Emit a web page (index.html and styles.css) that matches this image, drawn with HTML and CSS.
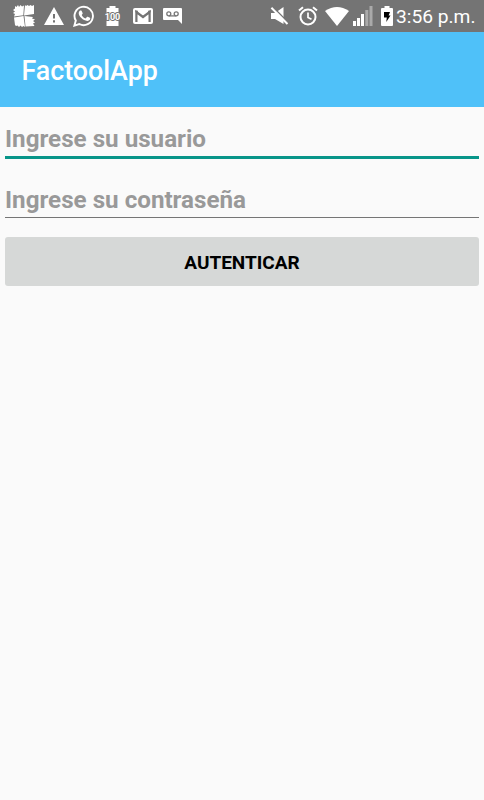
FILE: index.html
```html
<!DOCTYPE html>
<html lang="es">
<head>
<meta charset="utf-8">
<title>FactoolApp</title>
<link rel="stylesheet" href="styles.css">
</head>
<body>
<div class="status">
  <div class="notifications">
    <svg width="22" height="22" viewBox="0 0 22 22"><path fill="#fff" d="M2 1l1.500 1L5 0l1 2 1.500-2L9 1.500 11 .5l-.7 9.800L1 11.500 2 9 0 8l2-1.500L0 5l2-1.500zM12 0l1 1 1.500-1L16 1l1.500-1L19 1l2-1v9l-10 1.600zM1 12.500l9.500-1.400L12 22l-1.500-1L9 22l-1.500-1.500L6 22l-1.500-1.500L3 21l-1-1zM11.500 11l8.500 1-1 1.500 3 1-2 1.500 2 1.500-2 1 1.500 2.500-9 .500z"/></svg>
    <svg width="20" height="18" viewBox="0 0 20 18"><path fill="#fff" fill-rule="evenodd" d="M10 0l10 18H0zM9 7v4.500h2V7zm0 6.200v2.200h2v-2.200z"/></svg>
    <svg width="22" height="22" viewBox="0 0 22 22"><path fill="none" stroke="#fff" stroke-width="1.900" d="M1.400 20.600l1.400-5A9.200 9.200 0 1 1 6.300 19z"/><path fill="#fff" d="M7.100 5.600h1c.4 0 .6.3.8.8l.8 1.900c.1.4-.5 1.100-1 1.600.9 1.700 2.100 2.800 3.900 3.500l1.300-1.500c.3-.3.6-.2.9-.1l2.100 1c.4.2.4.5.3.9-.2 1.300-1.600 2.200-2.900 2.200-4.300-.3-8.500-4.500-8.600-7.600 0-1 .6-2.200 1.400-2.700z"/></svg>
    <svg class="level" width="19" height="20" viewBox="0 0 19 20"><path fill="#fff" d="M6.500 0h6v2h3v18h-12V2h3z"/><text x="9.500" y="14" text-anchor="middle">100</text></svg>
    <svg class="mail" width="20" height="16" viewBox="0 0 20 16"><rect width="20" height="16" rx="2" fill="#fff"/><path fill="none" stroke="#747474" stroke-width="2.200" d="M3.400 14V4L10 9l6.600-5v10"/><path fill="#747474" d="M2.300 2.500L5 2.800 4.500 6 2.300 4zm15.400 0L15 2.800l.5 3.200 2.200-2z"/></svg>
    <svg class="voice" width="19" height="16" viewBox="0 0 19 16"><path fill="#fff" d="M1 0h17q1 0 1 1v15l-4-4H1q-1 0-1-1V1q0-1 1-1z"/><g fill="none" stroke="#777" stroke-width="1.300"><circle cx="5.800" cy="5.800" r="2"/><circle cx="13.200" cy="5.800" r="2"/><path d="M5.800 7.900h7.400"/></g></svg>
  </div>
  <div class="system">
    <svg class="mute" width="19" height="20" viewBox="0 0 19 20"><path fill="#fff" d="M1 7h4l8.500-6v17L5 13H1z"/><path stroke="#747474" stroke-width="1.500" d="M3.200 1.400l15.500 15.500"/><path stroke="#fff" stroke-width="2" d="M1.400 1.800L17.500 18"/></svg>
    <svg class="alarm" width="20" height="20" viewBox="0 0 20 20"><g fill="none" stroke="#fff"><circle cx="10" cy="11" r="7.500" stroke-width="2"/><path stroke-width="1.700" d="M10 6.500v5l3.500 1.800"/><path stroke-width="2" d="M1 4.600l4-3.300m10 0l4 3.300"/></g></svg>
    <svg class="wifi" width="24" height="19" viewBox="0 0 24 19"><path fill="#fff" d="M0 4Q12-4 24 4L12 19z"/></svg>
    <svg class="signal" width="20" height="20" viewBox="0 0 20 20"><path fill="#fff" d="M0 15h3v5H0zM4 12h3v8H4zM8 8h3v12H8z"/><path fill="#aaa" d="M12.300 4h3v16h-3zM16.500 0h3v20h-3z"/></svg>
    <svg class="battery" width="12" height="20" viewBox="0 0 12 20"><path fill="#fff" d="M3.500 0h5v2H11q1 0 1 1v16q0 1-1 1H1q-1 0-1-1V3q0-1 1-1h2.500z"/><path fill="#000" d="M3 6h6L7.600 9.500H9.500L5.300 16l.5-4.500H3z"/></svg>
    <span class="time">3:56 p.m.</span>
  </div>
</div>
<header class="bar"><h1>FactoolApp</h1></header>
<form class="login">
  <input class="field active" type="text" placeholder="Ingrese su usuario">
  <input class="field" type="password" placeholder="Ingrese su contraseña">
  <button class="submit" type="button">AUTENTICAR</button>
</form>
</body>
</html>
```
FILE: styles.css
```css
* { box-sizing: border-box; }
body { margin: 0; min-height: 800px; background: #fafafa; font-family: Roboto, "Liberation Sans", sans-serif; }
svg { display: block; flex: none; }
.status { height: 32px; background: #747474; color: #fff; display: flex; justify-content: space-between; align-items: center; padding: 0 10px 0 13px; }
.notifications { display: flex; align-items: center; gap: 9px; }
.level { margin: 0 -1px; overflow: visible; }
.level text { fill: #fff; stroke: #747474; stroke-width: 2px; paint-order: stroke; font: 700 9px Roboto, sans-serif; }
.mail { margin-left: 3px; }
.voice { margin-left: 1px; }
.system { display: flex; align-items: center; }
.alarm { margin-left: 9px; }
.wifi { margin-left: 7px; }
.signal { margin-left: 4px; }
.battery { margin-left: 8px; }
.time { margin-left: 3px; width: 78px; padding-top: 2px; font-size: 19.2px; line-height: 30px; white-space: nowrap; }
.bar { height: 75px; background: #4fc1f9; display: flex; align-items: center; padding: 3px 21.5px 0; }
.bar h1 { margin: 0; color: #fff; font-size: 26.8px; font-weight: 500; line-height: 32px; }
.login { padding: 15px 5px 0; display: flex; flex-direction: column; }
.field { width: 100%; height: 34px; margin: 0 0 19px; padding: 0 0 2px; border: 0; border-bottom: 1px solid #757575; border-radius: 0; outline: 0; background: transparent; color: #111; font: 700 24.2px Roboto, sans-serif; }
.field.active { height: 37px; margin-bottom: 25px; padding-bottom: 1px; border-bottom: 3px solid #079589; }
.field::placeholder { color: #999; opacity: 1; }
.submit { height: 49px; padding: 1px 0 0; border: 0; border-radius: 3px; background: #d6d8d7; color: #000; font: 700 19px Roboto, sans-serif; }
```
